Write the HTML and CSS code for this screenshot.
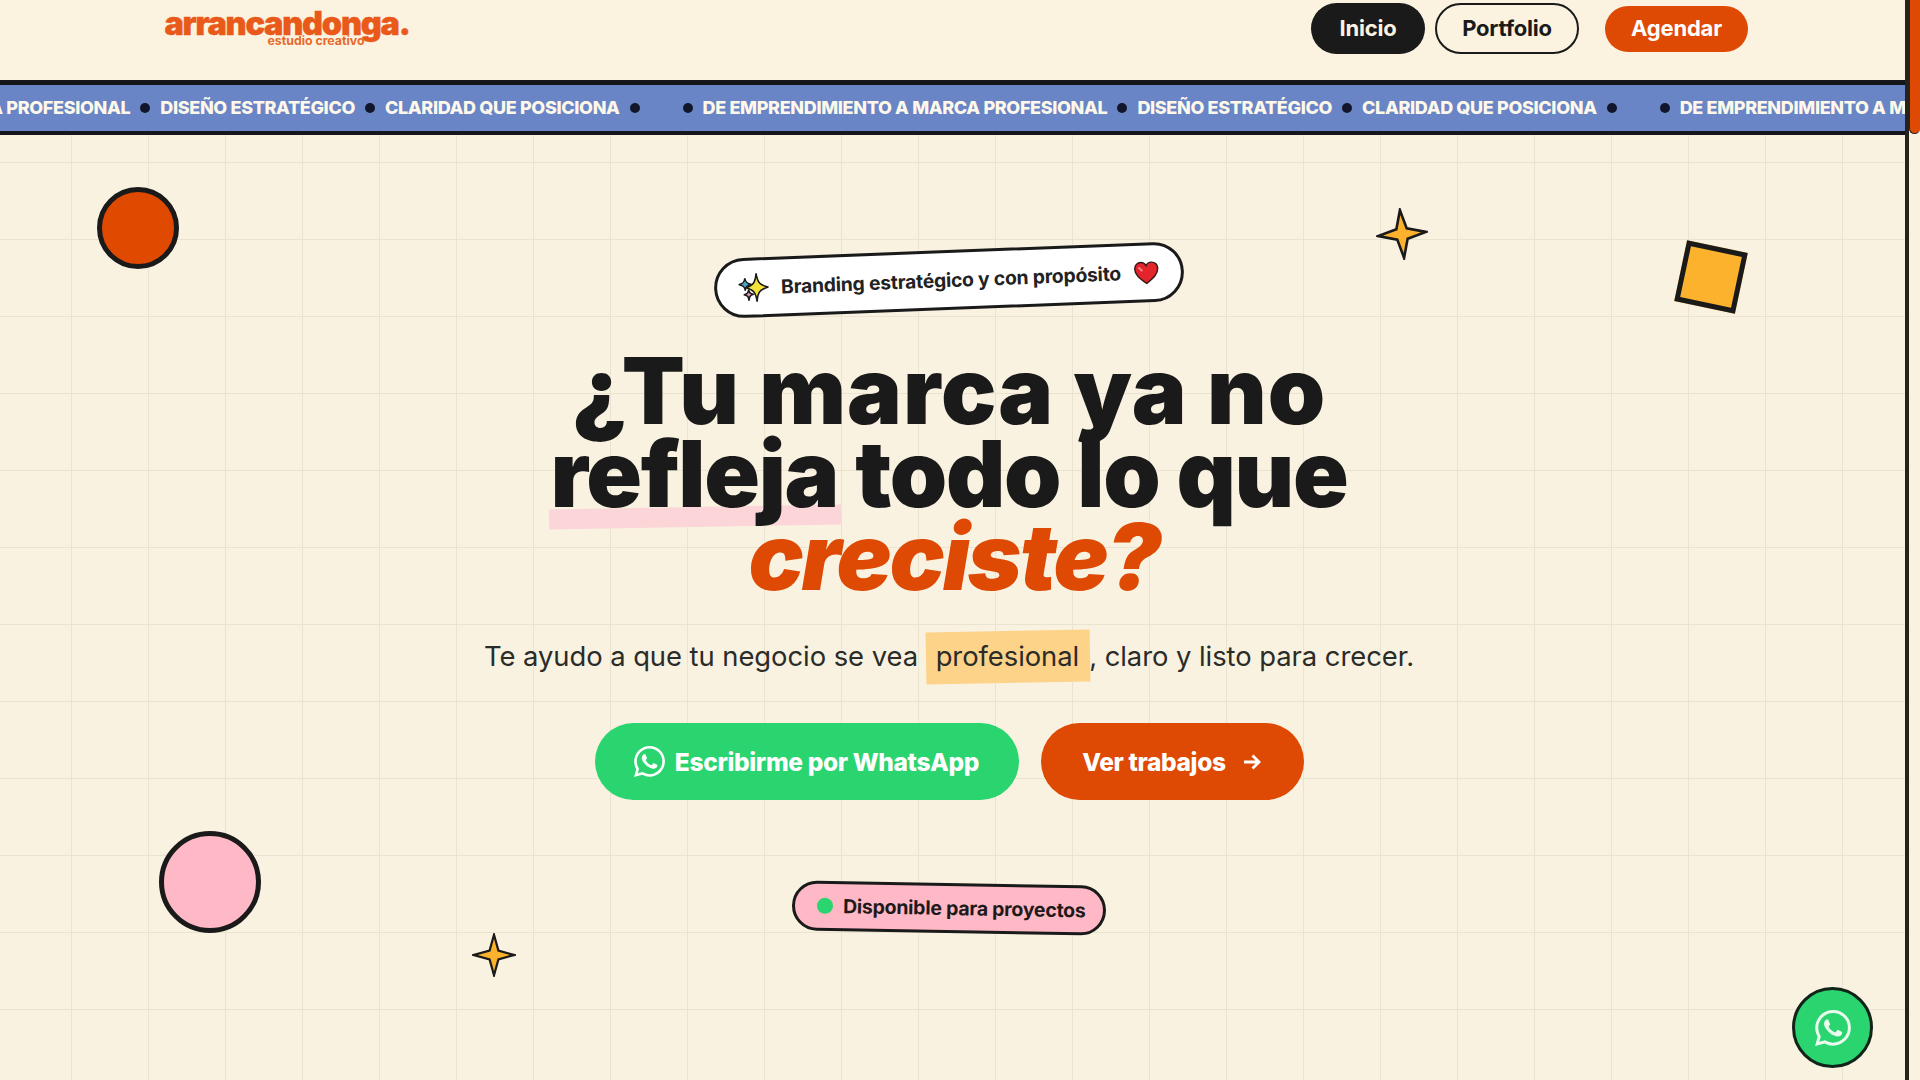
FILE: index.html
```html
<!DOCTYPE html>
<html lang="es">
<head>
<meta charset="utf-8">
<title>arrancandonga</title>
<link rel="stylesheet" href="styles.css">
</head>
<body>
<div class="shell">
  <div class="page">
    <header class="nav">
      <a class="logo"><span class="logo-name">arrancandonga.</span><span class="logo-sub">estudio creativo</span></a>
      <nav class="nav-links">
        <a class="nav-btn nav-dark">Inicio</a>
        <a class="nav-btn nav-outline">Portfolio</a>
        <a class="nav-btn nav-cta">Agendar</a>
      </nav>
    </header>
    <div class="band">
      <div class="track">
        <span class="m">DE EMPRENDIMIENTO A MARCA PROFESIONAL</span><i class="dot"></i>
        <span class="m">DISEÑO ESTRATÉGICO</span><i class="dot"></i>
        <span class="m">CLARIDAD QUE POSICIONA</span><i class="dot dot-end"></i><i class="dot"></i>
        <span class="m">DE EMPRENDIMIENTO A MARCA PROFESIONAL</span><i class="dot"></i>
        <span class="m">DISEÑO ESTRATÉGICO</span><i class="dot"></i>
        <span class="m">CLARIDAD QUE POSICIONA</span><i class="dot dot-end"></i><i class="dot"></i>
        <span class="m">DE EMPRENDIMIENTO A MARCA PROFESIONAL</span>
      </div>
    </div>
    <main class="hero">
      <i class="shape circle-red"></i>
      <i class="shape circle-pink"></i>
      <i class="shape square"></i>
      <svg class="shape star star-a" viewBox="0 0 50 50"><path d="M25 2 L30 20 L48 25 L30 30 L25 48 L20 30 L2 25 L20 20Z"/></svg>
      <svg class="shape star star-b" viewBox="0 0 50 50"><path d="M25 2 L30 20 L48 25 L30 30 L25 48 L20 30 L2 25 L20 20Z"/></svg>

      <div class="hero-col">
        <div class="badge">
          <svg class="badge-spark" viewBox="0 0 28 28">
            <path class="sp-y" d="M17 2 C18 10 20 12 27 14 C20 16 18 18 17 26 C16 18 14 16 8 14 C14 12 16 10 17 2Z"/>
            <path class="sp-b" d="M7 6 C7.500 9 8.500 10 12 11 C8.500 12 7.500 13 7 16 C6.500 13 5.500 12 2 11 C5.500 10 6.500 9 7 6Z"/>
            <path class="sp-p" d="M10 16 C10.500 18.500 11 19 14 20 C11 21 10.500 21.500 10 25 C9.500 21.500 9 21 6 20 C9 19 9.500 18.500 10 16Z"/>
          </svg>
          <span>Branding estratégico y con propósito</span>
          <svg class="badge-heart" viewBox="0 0 28 26"><path class="heart" d="M14 24 C6 18 2 14 2 8.500 C2 4.500 5 2 8.500 2 C11 2 13 3.500 14 5.500 C15 3.500 17 2 19.500 2 C23 2 26 4.500 26 8.500 C26 14 22 18 14 24Z"/><path class="heart-shine" d="M6 7 L10 11"/></svg>
        </div>

        <h1 class="title">
          <span class="line line-a">¿Tu marca ya no</span>
          <span class="line line-b"><span class="mark-wrap"><i class="mark-pink"></i><span class="mark-text">refleja</span></span> todo lo que</span>
          <span class="line accent">creciste?</span>
        </h1>

        <p class="lead">Te ayudo a que tu negocio se vea <span class="hl"><i class="hl-bg"></i><span class="hl-text">profesional</span></span>, claro y listo para crecer.</p>

        <div class="actions">
          <a class="btn btn-wa">
            <svg class="wa-icon" viewBox="0 0 24 24"><path d="M17.472 14.382c-.297-.149-1.758-.867-2.03-.967-.273-.099-.471-.148-.67.15-.197.297-.767.966-.94 1.164-.173.199-.347.223-.644.075-.297-.15-1.255-.463-2.39-1.475-.883-.788-1.48-1.761-1.653-2.059-.173-.297-.018-.458.13-.606.134-.133.298-.347.446-.52.149-.174.198-.298.298-.497.099-.198.05-.371-.025-.52-.075-.149-.669-1.612-.916-2.207-.242-.579-.487-.5-.669-.51-.173-.008-.371-.01-.57-.01-.198 0-.52.074-.792.372-.272.297-1.04 1.016-1.04 2.479 0 1.462 1.065 2.875 1.213 3.074.149.198 2.096 3.2 5.077 4.487.709.306 1.262.489 1.694.625.712.227 1.36.195 1.871.118.571-.085 1.758-.719 2.006-1.413.248-.694.248-1.289.173-1.413-.074-.124-.272-.198-.57-.347m-5.421 7.403h-.004a9.87 9.87 0 01-5.031-1.378l-.361-.214-3.741.982.998-3.648-.235-.374a9.86 9.86 0 01-1.51-5.26c.001-5.45 4.436-9.884 9.888-9.884 2.64 0 5.122 1.03 6.988 2.898a9.825 9.825 0 012.893 6.994c-.003 5.45-4.437 9.884-9.885 9.884m8.413-18.297A11.815 11.815 0 0012.05 0C5.495 0 .16 5.335.157 11.892c0 2.096.547 4.142 1.588 5.945L.057 24l6.305-1.654a11.882 11.882 0 005.683 1.448h.005c6.554 0 11.89-5.335 11.893-11.893a11.821 11.821 0 00-3.48-8.413z"/></svg>
            <span>Escribirme por WhatsApp</span>
          </a>
          <a class="btn btn-work">
            <span>Ver trabajos</span>
            <svg class="arrow" viewBox="0 0 20 20"><path d="M2 10 H17 M10.500 3.500 L17 10 L10.500 16.500"/></svg>
          </a>
        </div>

        <div class="status"><i class="status-dot"></i><span>Disponible para proyectos</span></div>
      </div>

      <a class="fab">
        <svg class="fab-icon" viewBox="0 0 24 24"><path d="M17.472 14.382c-.297-.149-1.758-.867-2.03-.967-.273-.099-.471-.148-.67.15-.197.297-.767.966-.94 1.164-.173.199-.347.223-.644.075-.297-.15-1.255-.463-2.39-1.475-.883-.788-1.48-1.761-1.653-2.059-.173-.297-.018-.458.13-.606.134-.133.298-.347.446-.52.149-.174.198-.298.298-.497.099-.198.05-.371-.025-.52-.075-.149-.669-1.612-.916-2.207-.242-.579-.487-.5-.669-.51-.173-.008-.371-.01-.57-.01-.198 0-.52.074-.792.372-.272.297-1.04 1.016-1.04 2.479 0 1.462 1.065 2.875 1.213 3.074.149.198 2.096 3.2 5.077 4.487.709.306 1.262.489 1.694.625.712.227 1.36.195 1.871.118.571-.085 1.758-.719 2.006-1.413.248-.694.248-1.289.173-1.413-.074-.124-.272-.198-.57-.347m-5.421 7.403h-.004a9.87 9.87 0 01-5.031-1.378l-.361-.214-3.741.982.998-3.648-.235-.374a9.86 9.86 0 01-1.51-5.26c.001-5.45 4.436-9.884 9.888-9.884 2.64 0 5.122 1.03 6.988 2.898a9.825 9.825 0 012.893 6.994c-.003 5.45-4.437 9.884-9.885 9.884m8.413-18.297A11.815 11.815 0 0012.05 0C5.495 0 .16 5.335.157 11.892c0 2.096.547 4.142 1.588 5.945L.057 24l6.305-1.654a11.882 11.882 0 005.683 1.448h.005c6.554 0 11.89-5.335 11.893-11.893a11.821 11.821 0 00-3.48-8.413z"/></svg>
      </a>
    </main>
  </div>
  <div class="scrollbar"><div class="thumb"></div></div>
</div>
</body>
</html>
```
FILE: styles.css
```css
* { box-sizing: border-box; }
html, body { margin: 0; height: 100%; overflow: hidden; }
body { font-family: Inter, "Noto Sans", sans-serif; color: #1a1a1a; background: #fbf3e0; }
.shell { display: flex; width: 1920px; height: 1080px; overflow: hidden; }
.page { width: 1905px; flex: none; display: flex; flex-direction: column; height: 100%; }

/* scrollbar */
.scrollbar { flex: 1; border-left: 4px solid #26221c; background: #faf2e0; }
.thumb { height: 134px; background: #de4a04; border: 1px solid #26221c; border-top: 0; border-right: 0; border-radius: 0 0 6px 6px; }

/* nav */
.nav { height: 80px; flex: none; background: #fbf3e0; display: flex; justify-content: space-between; align-items: flex-start; padding: 3px 157px 0 163px; }
.logo { display: flex; flex-direction: column; align-items: center; color: #e8591a; width: 248px; padding-top: 2px; }
.logo-name { font-size: 32.500px; line-height: 38px; font-weight: 900; letter-spacing: -1.25px; white-space: nowrap; -webkit-text-stroke: .4px #e8591a; }
.logo-sub { font-size: 12.300px; line-height: 12px; font-weight: 700; margin-top: -8px; margin-left: 58px; color: #e8692a; white-space: nowrap; }
.nav-links { display: flex; align-items: center; height: 51px; }
.nav-btn { height: 51px; display: flex; align-items: center; justify-content: center; border-radius: 26px; font-size: 22px; font-weight: 700; letter-spacing: -.2px; padding-bottom: 2px; }
.nav-dark { width: 114px; background: #1a1a1a; color: #fbf3e0; }
.nav-outline { width: 144px; margin-left: 10px; border: 2.500px solid #1a1a1a; color: #1a1a1a; }
.nav-cta { width: 143px; height: 46px; margin-left: 26px; background: #de4a04; color: #fff; border-radius: 23px; }

/* marquee band */
.band { height: 55px; flex: none; background: #6a85c6; border-top: 5px solid #15151c; border-bottom: 4px solid #15151c; overflow: hidden; display: flex; align-items: center; }
.track { display: flex; align-items: center; gap: 10px; margin-left: -274.500px; white-space: nowrap; flex: none; }
.m { color: #fdf8ea; font-size: 18px; font-weight: 800; letter-spacing: -.35px; line-height: 46px; flex: none; }
.dot { width: 10px; height: 10px; flex: none; border-radius: 50%; background: #12162a; }
.dot-end { margin-right: 33px; }

/* hero */
.hero { flex: 1; position: relative; background-color: #f9f2e0; background-image: linear-gradient(#e9e3d0 1px, transparent 1px), linear-gradient(90deg, #e9e3d0 1px, transparent 1px); background-size: 77px 77px; background-position: 71px 27px; }
.hero-col { width: 1898px; display: flex; flex-direction: column; align-items: center; padding-top: 115px; }
.shape { position: absolute; display: block; }
.circle-red { left: 97px; top: 52px; width: 82px; height: 82px; border-radius: 50%; background: #e04a00; border: 5px solid #1a1a1a; }
.circle-pink { left: 159px; top: 696px; width: 102px; height: 102px; border-radius: 50%; background: #ffb8c6; border: 5px solid #1a1a1a; }
.square { left: 1680px; top: 111px; width: 62px; height: 62px; background: #fdb22d; border: 5px solid #1a1a1a; transform: rotate(12deg); }
.star path { fill: #fdb22d; stroke: #1a1a1a; stroke-width: 2.500; stroke-linejoin: miter; }
.star-a { left: 1376px; top: 73px; width: 52px; height: 52px; transform: rotate(-5deg); }
.star-b { left: 472px; top: 798px; width: 44px; height: 44px; }

/* badge */
.badge { width: 470px; height: 60px; flex: none; display: flex; align-items: center; background: #fff; border: 3px solid #1a1a1a; border-radius: 30px; padding: 0 21px 0 20px; transform: rotate(-2.200deg); font-size: 19.300px; font-weight: 700; color: #222; letter-spacing: -.2px; }
.badge span { flex: 1; text-align: center; white-space: nowrap; }
.badge-spark { width: 32px; height: 32px; flex: none; }
.badge-spark path { stroke: #1a1a1a; stroke-width: 1.400; stroke-linejoin: round; }
.sp-y { fill: #f6e33a; }
.sp-b { fill: #4aa8c4; }
.sp-p { fill: #eb9cc0; }
.badge-heart { width: 27px; height: 25px; flex: none; }
.heart { fill: #e3242b; stroke: #3a1a1a; stroke-width: 1.500; }
.heart-shine { stroke: #f58a8a; stroke-width: 2; fill: none; }

/* heading */
.title { margin: 39px 0 0; font-size: 92px; line-height: 83px; font-weight: 900; text-align: center; color: #1a1a1a; }
.line { display: block; white-space: nowrap; }
.line-a { letter-spacing: 1px; }
.line-b { letter-spacing: -1.300px; }
.accent { color: #de4a04; font-style: italic; letter-spacing: -2.200px; margin-left: 10px; }
.mark-wrap { position: relative; display: inline-block; }
.mark-pink { position: absolute; left: -2px; right: -2px; bottom: -12px; height: 20px; background: #fbd5d8; transform: rotate(-1deg); }
.mark-text { position: relative; }

/* lead */
.lead { margin: 38px 0 0; font-size: 27.400px; line-height: 40px; color: #2b2b28; white-space: nowrap; letter-spacing: -.05px; }
.hl { position: relative; display: inline-block; padding: 0 10px; }
.hl-bg { position: absolute; inset: -5px 0 -7px 0; background: #fdd389; transform: rotate(-1deg); }
.hl-text { position: relative; }

/* actions */
.actions { display: flex; gap: 22px; margin-top: 47px; }
.btn { height: 77px; border-radius: 39px; display: flex; align-items: center; color: #fff; font-size: 24.500px; font-weight: 800; letter-spacing: -.35px; white-space: nowrap; }
.btn-wa { width: 424px; background: #2ad46e; justify-content: center; gap: 10px; }
.wa-icon { width: 31px; height: 31px; fill: #fff; flex: none; }
.btn-work { width: 263px; background: #de4a04; justify-content: center; gap: 16px; }
.arrow { width: 20px; height: 20px; fill: none; stroke: #fff; stroke-width: 2.800; flex: none; }

/* status */
.status { margin-top: 83px; width: 314px; height: 50px; display: flex; align-items: center; gap: 10px; padding-left: 22px; background: #ffb8c6; border: 3px solid #1a1a1a; border-radius: 25px; font-size: 19.500px; font-weight: 700; color: #1f1a1a; letter-spacing: -.25px; transform: rotate(1deg); white-space: nowrap; }
.status-dot { width: 16px; height: 16px; flex: none; border-radius: 50%; background: #2ad46e; }

/* fab */
.fab { position: absolute; left: 1792px; top: 852px; width: 81px; height: 81px; border-radius: 50%; background: #2ad46e; border: 3px solid #12241a; display: flex; align-items: center; justify-content: center; }
.fab-icon { width: 36px; height: 36px; fill: #e9fbef; }
```
